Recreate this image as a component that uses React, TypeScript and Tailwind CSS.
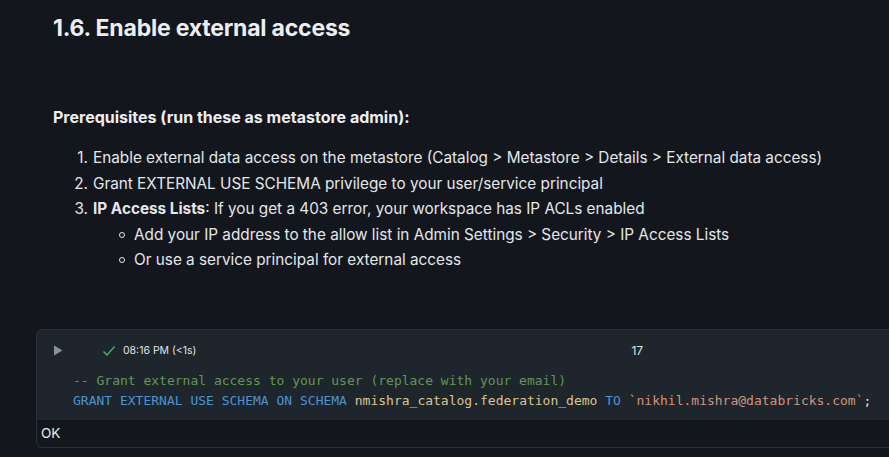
import React from "react";

export default function App() {
  return (
    <div className="w-[889px] h-[457px] overflow-hidden bg-[#13161d] text-[#e8eaee]" style={{ fontFamily: "Inter, 'Noto Sans', sans-serif" }}>
      <div className="pl-[53px] pt-[13px]">
        <h1 className="text-[23px] font-bold leading-[30px] tracking-[-0.2px] text-[#eceef2]">1.6. Enable external access</h1>
        <p className="mt-[62px] text-[16px] font-bold leading-[24px] text-[#eceef2]">Prerequisites (run these as metastore admin):</p>
        <ol className="mt-[16px] text-[15.3px] leading-[25.5px] text-[#e4e6ea]">
          <li className="flex"><span className="w-[40px] text-right pr-[5px]">1.</span><span>Enable external data access on the metastore (Catalog &gt; Metastore &gt; Details &gt; External data access)</span></li>
          <li className="flex"><span className="w-[40px] text-right pr-[5px]">2.</span><span>Grant EXTERNAL USE SCHEMA privilege to your user/service principal</span></li>
          <li className="flex"><span className="w-[40px] text-right pr-[5px]">3.</span><span><b className="font-bold">IP Access Lists</b>: If you get a 403 error, your workspace has IP ACLs enabled</span></li>
          <li className="flex items-center pl-[66px]"><span className="w-[6px] h-[6px] rounded-full border border-[#e4e6ea] mr-[9px] mt-[1px]"></span><span>Add your IP address to the allow list in Admin Settings &gt; Security &gt; IP Access Lists</span></li>
          <li className="flex items-center pl-[66px]"><span className="w-[6px] h-[6px] rounded-full border border-[#e4e6ea] mr-[9px] mt-[1px]"></span><span>Or use a service principal for external access</span></li>
        </ol>
      </div>
      <div className="ml-[36px] mt-[56px] rounded-l-[6px] border border-r-0 border-[#2a3038] overflow-hidden">
        <div className="bg-[#1f252c]">
          <div className="flex items-center h-[42px]">
            <svg width="10" height="11" viewBox="0 0 10 11" className="ml-[16px]"><path d="M1 0.5 L9.5 5.5 L1 10.5 Z" fill="#8593a2" /></svg>
            <svg width="14" height="12" viewBox="0 0 14 12" className="ml-[39px]"><path d="M1.5 6.5 L5 10 L12.5 1.5" stroke="#3fb35a" strokeWidth="1.5" fill="none" /></svg>
            <span className="ml-[7px] text-[10.5px] text-[#dfe2e6]">08:16 PM (&lt;1s)</span>
            <span className="ml-[435px] text-[12px] text-[#dfe2e6]">17</span>
          </div>
          <pre className="pl-[36px] pb-[9px] -mt-[1px] text-[13px] leading-[20px]" style={{ fontFamily: "'DejaVu Sans Mono', monospace" }}>
            <div className="text-[#629755]">-- Grant external access to your user (replace with your email)</div>
            <div><span className="text-[#4a94d4]">GRANT EXTERNAL USE SCHEMA ON SCHEMA </span><span className="text-[#dcc68c]">nmishra_catalog.federation_demo </span><span className="text-[#4a94d4]">TO </span><span className="text-[#d0957a]">`nikhil.mishra@databricks.com`</span><span className="text-[#dfe2e6]">;</span></div>
          </pre>
        </div>
        <div className="h-[27px] pl-[4px] flex items-center text-[13.5px] text-[#e8eaee]">OK</div>
      </div>
    </div>
  );
}
